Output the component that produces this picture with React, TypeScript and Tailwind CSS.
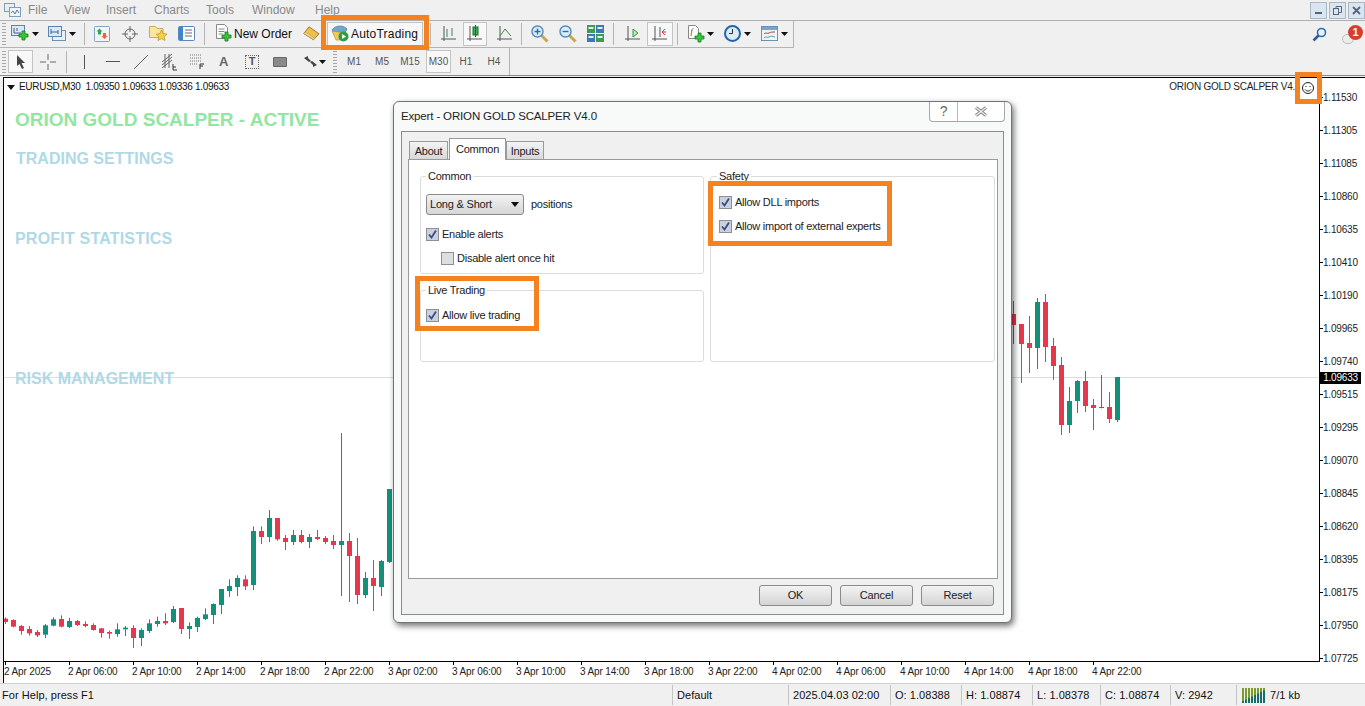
import React from "react";

type Candle = [string, number, number, number, number];

const G = "#14907a";
const R = "#e5384f";

// values read off the picture at 3x, y relative to 500
const leftCandles: Candle[] = [
  [R, 352, 356, 366, 372], [R, 358, 360, 380, 382], [R, 375, 378, 393, 404], [R, 378, 387, 400, 407],
  [R, 390, 396, 406, 411], [G, 372, 376, 404, 414], [G, 352, 358, 377, 379], [R, 346, 357, 380, 382],
  [G, 354, 363, 381, 384], [R, 360, 363, 375, 378], [R, 364, 372, 378, 382], [R, 370, 375, 390, 392],
  [R, 384, 385, 399, 413], [R, 392, 396, 401, 416], [G, 370, 388, 402, 410], [G, 378, 383, 388, 408],
  [R, 376, 384, 414, 444], [G, 385, 390, 414, 438], [G, 358, 370, 393, 399], [G, 350, 363, 372, 380],
  [R, 340, 363, 370, 375], [G, 318, 327, 366, 369], [R, 324, 324, 387, 402], [G, 367, 378, 387, 417],
  [G, 350, 354, 381, 396], [G, 325, 343, 357, 360], [G, 310, 312, 345, 372], [G, 267, 267, 315, 342],
  [G, 238, 258, 273, 291], [G, 226, 234, 261, 288], [R, 226, 238, 259, 270], [G, 79, 93, 255, 270],
  [R, 79, 93, 111, 132], [G, 30, 54, 111, 126], [R, 54, 54, 118, 122], [R, 105, 114, 126, 150],
  [G, 90, 105, 126, 135], [R, 90, 105, 126, 130], [G, 102, 111, 126, 144], [R, 90, 111, 117, 120],
  [R, 108, 114, 126, 132], [R, 105, 123, 135, 147], [G, -201, 123, 135, 288], [R, 99, 123, 168, 306],
  [R, 114, 168, 285, 312], [G, 216, 234, 285, 294], [R, 180, 234, 258, 333], [G, 180, 183, 261, 288],
  [G, -33, -33, 186, 189],
];

// y relative to 270 at 3x
const rightCandles: Candle[] = [
  [R, 93, 132, 165, 222], [R, 162, 162, 222, 339], [R, 138, 219, 234, 309], [G, 84, 96, 234, 297],
  [R, 72, 96, 231, 276], [R, 204, 228, 288, 330], [R, 261, 285, 465, 495], [G, 351, 393, 465, 489],
  [G, 330, 333, 393, 429], [R, 303, 333, 408, 426], [R, 387, 405, 414, 480], [G, 315, 411, 414, 415],
  [R, 366, 411, 447, 459], [G, 321, 321, 450, 456],
];

const prices = [
  "1.11530", "1.11305", "1.11085", "1.10860", "1.10635", "1.10410", "1.10190", "1.09965", "1.09740",
  "1.09515", "1.09295", "1.09070", "1.08845", "1.08620", "1.08395", "1.08175", "1.07950", "1.07725",
];

const times = [
  "2 Apr 2025", "2 Apr 06:00", "2 Apr 10:00", "2 Apr 14:00", "2 Apr 18:00", "2 Apr 22:00",
  "3 Apr 02:00", "3 Apr 06:00", "3 Apr 10:00", "3 Apr 14:00", "3 Apr 18:00", "3 Apr 22:00",
  "4 Apr 02:00", "4 Apr 06:00", "4 Apr 10:00", "4 Apr 14:00", "4 Apr 18:00", "4 Apr 22:00",
];

function CandleShape({ c, x, base }: { c: Candle; x: number; base: number }) {
  const y = (v: number) => base + v / 3;
  return (
    <g>
      <rect x={x} y={y(c[1])} width={1} height={(c[4] - c[1]) / 3} fill={c[0]} />
      <rect x={x - 2} y={y(c[2])} width={5} height={Math.max((c[3] - c[2]) / 3, 1)} fill={c[0]} />
    </g>
  );
}

function Plot() {
  return (
    <svg width={1315} height={583} viewBox="4 78 1315 583" className="block">
      <rect x={4} y={377} width={1315} height={1} fill="#dcdcdc" />
      <rect x={394} y={463} width={6} height={28} fill="#bfe3ea" />
      <rect x={1004} y={280} width={7} height={36} fill="#edc9da" />
      {leftCandles.map((c, i) => (
        <CandleShape key={i} c={c} x={5 + 8 * i} base={500} />
      ))}
      {rightCandles.map((c, i) => (
        <CandleShape key={i} c={c} x={1013 + 8 * i} base={270} />
      ))}
    </svg>
  );
}

const Grip = () => (
  <div className="ml-[2px] h-[22px] w-[4px] shrink-0 bg-[repeating-linear-gradient(to_bottom,#a8a8a8_0,#a8a8a8_1px,transparent_1px,transparent_3px)]" />
);

const Sep = ({ className }: { className: string }) => <div className={`h-[22px] w-px shrink-0 bg-[#b4b4b4] ${className}`} />;

const Caret = ({ className }: { className: string }) => (
  <svg width={7} height={4} viewBox="0 0 7 4" className={`shrink-0 ${className}`}>
    <path d="M0 0h7L3.5 4z" fill="#111" />
  </svg>
);

const Plus = ({ x, y }: { x: number; y: number }) => (
  <path
    transform={`translate(${x} ${y})`}
    d="M3 0h3v3h3v3H6v3H3V6H0V3h3z"
    fill="#3cc43c"
    stroke="#127a1e"
    strokeWidth={0.8}
  />
);

const NewChartIcon = () => (
  <svg width={19} height={17} viewBox="0 0 19 17" className="block">
    <rect x={0.5} y={0.5} width={13} height={10} fill="#dbe9f7" stroke="#5b84b1" />
    <path d="M3 3v5M3 8h7M6 3v3" stroke="#44618a" fill="none" />
    <Plus x={8} y={6} />
  </svg>
);

const ProfileIcon = () => (
  <svg width={18} height={17} viewBox="0 0 18 17" className="block">
    <rect x={4.5} y={5.5} width={13} height={10} fill="#e7eff8" stroke="#6b8fb8" />
    <rect x={0.5} y={1.5} width={13} height={10} fill="#dbe9f7" stroke="#5b84b1" />
    <path d="M3 4v5M3 7h7M10 5v4" stroke="#44618a" fill="none" />
  </svg>
);

const MarketIcon = () => (
  <svg width={16} height={16} viewBox="0 0 16 16" className="block">
    <rect x={0.5} y={0.5} width={15} height={15} rx={1} fill="#f0f5fb" stroke="#86a4c6" />
    <path d="M5.5 2.5l3 3H7v3H4v-3H2.5z" fill="#2fa84a" />
    <path d="M10.5 13l-3-3H9V7h3v3h1.5z" fill="#e8663c" />
  </svg>
);

const NavIcon = () => (
  <svg width={16} height={16} viewBox="0 0 16 16" fill="none" stroke="#666" className="block">
    <circle cx={8} cy={8} r={5} />
    <path d="M8 0v6M8 10v6M0 8h6M10 8h6" />
  </svg>
);

const FolderStarIcon = () => (
  <svg width={19} height={17} viewBox="0 0 19 17" className="block">
    <path d="M.5 3V1.5h6l1.5 2h6v9H.5z" fill="#fbe5a0" stroke="#c9a95a" />
    <path d="M12.5 5l1.7 3.6 3.8.5-2.8 2.6.8 3.8-3.5-1.9-3.5 1.9.8-3.8L7 9.1l3.8-.5z" fill="#f7d23e" stroke="#b58f1f" strokeWidth={0.7} />
  </svg>
);

const TerminalIcon = () => (
  <svg width={17} height={16} viewBox="0 0 17 16" className="block">
    <rect x={0.5} y={0.5} width={16} height={14} rx={1} fill="#fff" stroke="#5a86b8" />
    <rect x={1} y={1} width={4} height={13} fill="#3e86cf" />
    <path d="M7 4h7M7 7h7M7 10h7" stroke="#667" />
  </svg>
);

const NewOrderIcon = () => (
  <svg width={18} height={19} viewBox="0 0 18 19" className="block">
    <path d="M1.5.5h8l3 3v11h-11z" fill="#fff" stroke="#888" />
    <path d="M3.5 5h6M3.5 7.5h6M3.5 10h4" stroke="#8a8a8a" />
    <Plus x={7} y={8} />
  </svg>
);

const BookIcon = () => (
  <svg width={17} height={15} viewBox="0 0 17 15" className="block">
    <path d="M6 .8l10 7-5.5 6L.8 7.5z" fill="#ecc04e" stroke="#a8792a" />
    <path d="M.8 7.5l9.7 6 1-1.2L2.2 6z" fill="#f7e6ac" stroke="#a8792a" strokeWidth={0.5} />
  </svg>
);

const AutoTradingIcon = () => (
  <svg width={18} height={17} viewBox="0 0 18 17" className="block shrink-0">
    <path d="M1 5c2-3 5-4 8-4s5 1 7 3l-2 4H3z" fill="#6fa8cf" stroke="#3e6f92" strokeWidth={0.6} />
    <path d="M1 6l4 9h6l3-7z" fill="#eecb57" stroke="#a8893a" strokeWidth={0.6} />
    <circle cx={12.5} cy={11.5} r={5} fill="#2e9d45" />
    <path d="M11 9l4 2.5L11 14z" fill="#fff" />
  </svg>
);

const Axes = ({ children }: { children?: React.ReactNode }) => (
  <svg width={16} height={17} viewBox="0 0 16 17" fill="none" className="block">
    <path d="M3 1v15M0 14h15" stroke="#555" />
    {children}
  </svg>
);

const ZoomIcon = ({ plus }: { plus: boolean }) => (
  <svg width={18} height={18} viewBox="0 0 18 18" fill="none" className="block">
    <path d="M10.5 10.5l6 6" stroke="#c9a650" strokeWidth={3} />
    <circle cx={6.5} cy={6.5} r={5.5} fill="#dcedfa" stroke="#4f8ac0" strokeWidth={1.4} />
    <path d={plus ? "M3.5 6.5h6M6.5 3.5v6" : "M3.5 6.5h6"} stroke="#2e6ea8" strokeWidth={1.4} />
  </svg>
);

const TileIcon = () => (
  <svg width={17} height={17} viewBox="0 0 17 17" className="block">
    <rect width={8} height={8} fill="#3f9a54" />
    <rect x={9} width={8} height={8} fill="#3a78b8" />
    <rect y={9} width={8} height={8} fill="#3a78b8" />
    <rect x={9} y={9} width={8} height={8} fill="#3f9a54" />
    <path d="M1.5 3h5M10.5 3h5M1.5 12h5M10.5 12h5" stroke="#e6eef6" strokeWidth={2} />
  </svg>
);

const IndicatorIcon = () => (
  <svg width={17} height={18} viewBox="0 0 17 18" className="block">
    <path d="M.5.5h7l3 3v10H.5z" fill="#fff" stroke="#888" />
    <text x={2.5} y={9} fontSize={8} fontStyle="italic" fill="#333" fontFamily="'Liberation Serif', serif">f</text>
    <Plus x={7} y={8} />
  </svg>
);

const ClockIcon = () => (
  <svg width={17} height={17} viewBox="0 0 17 17" fill="none" className="block">
    <circle cx={8.5} cy={8.5} r={7.5} fill="#dfe9f4" stroke="#1e66ad" strokeWidth={2} />
    <path d="M8.5 4v4.5H5" stroke="#234" />
  </svg>
);

const TemplateIcon = () => (
  <svg width={17} height={15} viewBox="0 0 17 15" fill="none" className="block">
    <rect x={0.5} y={0.5} width={16} height={14} fill="#eef4fa" stroke="#6d8fb3" />
    <rect x={1} y={1} width={15} height={3} fill="#7ba3cc" />
    <path d="M3 8c2-2 3 0 5-1s3-1 6-1" stroke="#a44" />
    <path d="M3 12c2-2 3 0 5-1s3-1 6 0" stroke="#4a8" />
  </svg>
);

const WinButton = ({ children }: { children: React.ReactNode }) => (
  <div className="flex h-[17px] w-[17px] items-center justify-center border border-[#a9b8c9] bg-[#dbe5ef]">{children}</div>
);

function MenuBar() {
  const items: [string, string][] = [
    ["File", "w-[36px]"], ["View", "w-[42px]"], ["Insert", "w-[48px]"], ["Charts", "w-[52px]"],
    ["Tools", "w-[46px]"], ["Window", "w-[63px]"], ["Help", "w-[40px]"],
  ];
  return (
    <div className="flex h-[20px] shrink-0 items-center bg-[#f0f0f0]">
      <svg width={17} height={16} viewBox="0 0 17 16" className="ml-[4px] mr-[7px]" fill="none">
        <rect x={0.5} y={1.5} width={10} height={8} fill="#e6eef7" stroke="#7d9dbd" />
        <rect x={5.5} y={5.5} width={11} height={9} fill="#eef4fa" stroke="#7d9dbd" />
        <path d="M7 11l2-2 2 3 2-4 2 3" stroke="#5a7ea6" />
      </svg>
      {items.map(([name, w]) => (
        <span key={name} className={`${w} text-[12px] text-[#888888]`}>{name}</span>
      ))}
      <div className="ml-auto mr-0 flex gap-[2px]">
        <WinButton>
          <div className="mt-[6px] h-[2px] w-[7px] bg-[#54667d]" />
        </WinButton>
        <WinButton>
          <svg width={9} height={9} viewBox="0 0 9 9" fill="none" stroke="#54667d">
            <rect x={0.5} y={2.5} width={5} height={6} />
            <path d="M3 2.5v-2h5.5v6h-3" />
          </svg>
        </WinButton>
        <WinButton>
          <svg width={9} height={9} viewBox="0 0 9 9" stroke="#54667d" strokeWidth={1.8}>
            <path d="M1 1l7 7M8 1L1 8" />
          </svg>
        </WinButton>
      </div>
    </div>
  );
}

function ToolbarTop() {
  return (
    <div className="flex h-[28px] shrink-0 border-t border-[#b0b0b0] bg-[#f0f0f0]">
      <div className="flex w-[794px] shrink-0 items-center border-b border-r border-[#b4b4b4] pb-[1px]">
        <Grip />
        <div className="ml-[5px]"><NewChartIcon /></div>
        <Caret className="ml-[2px]" />
        <div className="ml-[9px]"><ProfileIcon /></div>
        <Caret className="ml-[3px]" />
        <Sep className="ml-[8px]" />
        <div className="ml-[9px]"><MarketIcon /></div>
        <div className="ml-[12px]"><NavIcon /></div>
        <div className="ml-[11px]"><FolderStarIcon /></div>
        <div className="ml-[10px]"><TerminalIcon /></div>
        <Sep className="ml-[9px]" />
        <div className="ml-[10px]"><NewOrderIcon /></div>
        <span className="ml-[1px] w-[58px] whitespace-nowrap text-[12px] text-[#111]">New Order</span>
        <div className="ml-[11px]"><BookIcon /></div>
        <div className="ml-[7px] flex h-[24px] w-[96px] shrink-0 items-center border border-[#c4c4c4] bg-[#f7f7f7] pl-[3px]">
          <AutoTradingIcon />
          <span className="ml-[2px] whitespace-nowrap text-[12px] tracking-[0.2px] text-[#111]">AutoTrading</span>
        </div>
        <Sep className="ml-[7px]" />
        <div className="ml-[10px]">
          <Axes><path d="M6 4v8M11 3v8" stroke="#3b8a48" /></Axes>
        </div>
        <div className="ml-[6px] flex h-[24px] w-[24px] shrink-0 items-center justify-center border border-[#c4c4c4] bg-[#f8f8f8]">
          <Axes>
            <rect x={6} y={2} width={5} height={8} fill="#3fae52" stroke="#1e6b2c" />
            <path d="M8.5 0v12" stroke="#1e6b2c" />
          </Axes>
        </div>
        <div className="ml-[10px]">
          <Axes><path d="M3 11l5-7 6 7" stroke="#3b8a48" /></Axes>
        </div>
        <Sep className="ml-[8px]" />
        <div className="ml-[9px]"><ZoomIcon plus /></div>
        <div className="ml-[10px]"><ZoomIcon plus={false} /></div>
        <div className="ml-[10px]"><TileIcon /></div>
        <Sep className="ml-[9px]" />
        <div className="ml-[11px]">
          <Axes><path d="M8 4l5 4-5 4z" fill="#bde8bd" stroke="#2c9a3c" /></Axes>
        </div>
        <div className="ml-[6px] flex h-[24px] w-[26px] shrink-0 items-center justify-center border border-[#c4c4c4] bg-[#f8f8f8]">
          <Axes>
            <path d="M8 2v10" stroke="#555" />
            <path d="M14 7H10M10 7l3-3M10 7l3 3" stroke="#c23a3a" />
          </Axes>
        </div>
        <Sep className="ml-[4px]" />
        <div className="ml-[10px]"><IndicatorIcon /></div>
        <Caret className="ml-[2px]" />
        <div className="ml-[10px]"><ClockIcon /></div>
        <Caret className="ml-[3px]" />
        <div className="ml-[10px]"><TemplateIcon /></div>
        <Caret className="ml-[3px]" />
      </div>
      <div className="flex flex-1 items-center">
        <svg width={15} height={15} viewBox="0 0 15 15" fill="none" className="ml-[518px]">
          <circle cx={9.5} cy={5.5} r={4} fill="#e8f2fb" stroke="#2c6db0" strokeWidth={1.6} />
          <path d="M6.5 8.5L1.5 13.5" stroke="#2c5f9e" strokeWidth={2.6} />
        </svg>
        <div className="relative ml-[15px] h-[20px] w-[22px]">
          <div className="absolute bottom-[1px] left-0 h-[10px] w-[12px] rounded-full border border-[#bcbcbc] bg-[#ececec]" />
          <div className="absolute right-[1px] top-0 flex h-[15px] w-[15px] items-center justify-center rounded-full bg-[#d4402b] text-[11px] font-bold text-white">1</div>
        </div>
      </div>
    </div>
  );
}

function ToolbarBottom() {
  const tf = ["M1", "M5", "M15", "M30", "H1", "H4"];
  return (
    <div className="flex h-[27px] shrink-0 bg-[#f0f0f0]">
      <div className="flex w-[510px] items-center border-r border-[#b4b4b4]">
        <Grip />
        <div className="ml-[2px] flex h-[23px] w-[25px] shrink-0 items-center justify-center border border-[#c4c4c4] bg-[#f8f8f8]">
          <svg width={10} height={14} viewBox="0 0 10 14"><path d="M1 0l8 8H5.5L8 13l-2 1-2.500-5L1 11z" fill="#444" /></svg>
        </div>
        <svg width={16} height={16} viewBox="0 0 16 16" className="ml-[7px]" stroke="#666"><path d="M8 0v6M8 10v6M0 8h6M10 8h6" /></svg>
        <Sep className="ml-[10px]" />
        <svg width={3} height={14} viewBox="0 0 3 14" className="ml-[16px]" stroke="#555"><path d="M1.500 0v14" /></svg>
        <svg width={14} height={3} viewBox="0 0 14 3" className="ml-[20px]" stroke="#555"><path d="M0 1.500h14" /></svg>
        <svg width={14} height={14} viewBox="0 0 14 14" className="ml-[14px]" stroke="#666"><path d="M0 14L14 0" /></svg>
        <svg width={16} height={18} viewBox="0 0 16 18" className="ml-[14px]" fill="none" stroke="#666">
          <path d="M0 9L10 1M0 12L10 4M0 15L10 7M3 1v14M7 1v14" />
          <path d="M11 11v6h4M11 14h3" stroke="#333" />
        </svg>
        <svg width={14} height={15} viewBox="0 0 14 15" className="ml-[12px]" fill="none" stroke="#777" strokeDasharray="1 1">
          <path d="M0 1h12M0 4h12M0 7h12M0 10h8" />
          <path d="M10 10v5M10 10h4M10 12h3" stroke="#333" strokeDasharray="none" />
        </svg>
        <span className="ml-[15px] w-[10px] text-[13px] font-bold text-[#666]">A</span>
        <div className="ml-[16px] flex h-[14px] w-[14px] shrink-0 items-center justify-center border border-dotted border-[#666] text-[11px] font-bold leading-none text-[#555]">T</div>
        <div className="ml-[14px] h-[10px] w-[14px] shrink-0 rounded-[1px] border border-[#666] bg-[#8a8a8a]" />
        <svg width={15} height={12} viewBox="0 0 15 12" className="ml-[16px]">
          <path d="M1 2l4-2v2l3 3-2 1zM14 9l-4 2V9L7 6l2-1z" fill="#444" />
        </svg>
        <Caret className="ml-[1px]" />
        <div className="ml-[5px]"><Grip /></div>
        <div className="w-[3px] shrink-0" />
        {tf.map((t) =>
          t === "M30" ? (
            <div key={t} className="ml-[2px] mr-[1px] flex h-[23px] w-[25px] shrink-0 items-center justify-center border border-[#c4c4c4] bg-[#f8f8f8] text-[10px] text-[#555]">{t}</div>
          ) : (
            <div key={t} className="w-[28px] shrink-0 text-center text-[10px] text-[#555]">{t}</div>
          ),
        )}
      </div>
    </div>
  );
}

function Chart() {
  return (
    <div className="flex min-h-0 flex-1 flex-col border-t border-[#8a8a8a] bg-[#f0f0f0] pl-[3px] pt-[1px]">
      <div className="flex flex-1 border-l border-t border-black bg-white">
        <div className="flex w-[1316px] shrink-0 flex-col">
          <div className="relative h-[584px] border-b border-r border-black">
            <Plot />
            <div className="absolute left-[3px] top-[3px] flex items-center whitespace-nowrap text-[10px] leading-[12px] tracking-[-0.3px] text-[#111]">
              <svg width={8} height={5} viewBox="0 0 8 5" className="mr-[4px]"><path d="M0 0h8L4 5z" fill="#111" /></svg>
              EURUSD,M30&nbsp; 1.09350 1.09633 1.09336 1.09633
            </div>
            <div className="absolute right-[24px] top-[3px] whitespace-nowrap text-[10px] leading-[12px] tracking-[-0.25px] text-[#222]">ORION GOLD SCALPER V4.</div>
            <svg width={14} height={14} viewBox="0 0 14 14" fill="none" stroke="#222" className="absolute left-[1297px] top-[3px]">
              <circle cx={7} cy={7} r={5.500} />
              <path d="M4 8.500c1.500 2 4.500 2 6 0M5 5v1M9 5v1" />
            </svg>
            <div className="absolute left-[11px] top-[30px] text-[19px] font-bold leading-[24px] text-[#93e6a0]">ORION GOLD SCALPER - ACTIVE</div>
            <div className="absolute left-[12px] top-[71px] text-[16px] font-bold leading-[20px] text-[#b0d9e6]">TRADING SETTINGS</div>
            <div className="absolute left-[11px] top-[151px] text-[16px] font-bold leading-[20px] tracking-[0.2px] text-[#b0d9e6]">PROFIT STATISTICS</div>
            <div className="absolute left-[11px] top-[291px] text-[16px] font-bold leading-[20px] text-[#b0d9e6]">RISK MANAGEMENT</div>
          </div>
          <div className="flex">
            {times.map((t) => (
              <div key={t} className="relative h-[21px] w-[64px] shrink-0 whitespace-nowrap pt-[4px] text-[10px] leading-[12px] tracking-[-0.15px] text-[#222]">
                <div className="absolute left-[1px] top-0 h-[3px] w-px bg-black" />
                {t}
              </div>
            ))}
          </div>
        </div>
        <div className="relative flex-1 overflow-hidden pt-[3px]">
          {prices.map((p) => (
            <div key={p} className="flex h-[33px] items-center text-[10px] tracking-[-0.2px] text-[#222]">
              <div className="h-px w-[3px] bg-black" />
              {p}
            </div>
          ))}
          <div className="absolute left-0 top-[294px] h-[12px] w-[41px] bg-black text-center text-[10px] leading-[12px] tracking-[-0.2px] text-white">1.09633</div>
        </div>
      </div>
    </div>
  );
}

function StatusBar() {
  const cells: [string, string][] = [
    ["Default", "w-[116px]"], ["2025.04.03 02:00", "w-[102px]"], ["O: 1.08388", "w-[71px]"], ["H: 1.08874", "w-[71px]"],
    ["L: 1.08378", "w-[68px]"], ["C: 1.08874", "w-[70px]"], ["V: 2942", "w-[66px]"],
  ];
  return (
    <div className="flex h-[23px] shrink-0 items-center border-t border-[#d0d0d0] bg-[#f0f0f0] text-[11px] tracking-[0.05px] text-[#111]">
      <span className="w-[672px] pl-[2px]">For Help, press F1</span>
      {cells.map(([c, w]) => (
        <div key={c} className={`${w} h-[20px] border-l border-[#c4c4c4] pl-[4px] leading-[20px]`}>{c}</div>
      ))}
      <div className="flex h-[20px] flex-1 items-center border-l border-[#c4c4c4] pl-[5px]">
        <svg width={24} height={15} viewBox="0 0 24 15" className="mr-[4px]">
          {[0, 3, 6, 9, 12, 15, 18, 21].map((x, i) => (
            <g key={x}>
              <rect x={x} y={0} width={2} height={15} fill="#7d9a2c" />
              <rect x={x} y={13 - i * 1.500} width={2} height={2 + i * 1.500} fill="#12706a" />
            </g>
          ))}
        </svg>
        7/1 kb
      </div>
    </div>
  );
}

const Check = ({ on = true }: { on?: boolean }) => (
  <span className={`flex h-[13px] w-[13px] shrink-0 items-center justify-center border border-[#8e8f8f] ${on ? "bg-[#c9d0e2]" : "bg-[#dedede]"}`}>
    {on && (
      <svg width={11} height={11} viewBox="0 0 11 11" fill="none">
        <path d="M2 5.500l2.500 3L9 1.500" stroke="#3c4c78" strokeWidth={1.800} />
      </svg>
    )}
  </span>
);

const CheckRow = ({ label, on, className }: { label: string; on?: boolean; className: string }) => (
  <div className={`flex h-[13px] items-center ${className}`}>
    <Check on={on} />
    <span className="ml-[3px] whitespace-nowrap">{label}</span>
  </div>
);

const Legend = ({ children, className }: { children: React.ReactNode; className?: string }) => (
  <legend className={`h-[14px] px-[2px] leading-[14px] ${className ?? ""}`}>{children}</legend>
);

const tabClass = "flex h-[18px] items-center justify-center border border-b-0 border-[#9a9a9a] bg-gradient-to-b from-[#f4f4f4] to-[#d8d8d8] pt-[1px]";

const DialogButton = ({ label, className }: { label: string; className: string }) => (
  <div className={`flex h-[21px] w-[73px] items-center justify-center rounded-[3px] border border-[#8a8a8a] bg-gradient-to-b from-[#f3f3f3] to-[#d4d4d4] tracking-[-0.1px] ${className}`}>{label}</div>
);

function Dialog() {
  return (
    <div className="absolute left-[393px] top-[101px] flex h-[522px] w-[619px] flex-col rounded-[6px] border border-[#6f7377] bg-[#f8f9f9] px-[7px] pb-[7px] text-[11px] tracking-[-0.25px] text-[#222] shadow-[2px_3px_6px_rgba(0,0,0,0.55)]">
      <div className="relative h-[29px] shrink-0">
        <div className="pt-[6px] text-[11.500px] leading-[16px] tracking-[-0.15px] text-[#222]">Expert - ORION GOLD SCALPER V4.0</div>
        <div className="absolute right-[-1px] top-0 flex h-[20px] w-[76px] rounded-b-[4px] border border-t-0 border-[#a8a8a8] bg-white">
          <div className="flex w-[28px] items-center justify-center border-r border-[#b8b8b8] text-[14px] text-[#666]">?</div>
          <div className="flex flex-1 items-center justify-center">
            <svg width={14} height={11} viewBox="0 0 14 11" fill="none">
              <path d="M2 1.500l10 8M12 1.500l-10 8" stroke="#7a7a7a" strokeWidth={3} />
              <path d="M2 1.500l10 8M12 1.500l-10 8" stroke="#f4f4f4" strokeWidth={1.300} />
            </svg>
          </div>
        </div>
      </div>
      <div className="flex min-h-0 flex-1 flex-col border border-[#8c8c8c] bg-[#f0f0f0] pl-[6px] pr-[5px]">
        <div className="mt-[6px] flex h-[21px] shrink-0 items-end pl-[1px]">
          <div className={`${tabClass} w-[39px]`}>About</div>
          <div className="z-10 -mb-px ml-[1px] flex h-[22px] w-[57px] items-center justify-center border border-b-0 border-[#9a9a9a] bg-white pb-[1px]">Common</div>
          <div className={`${tabClass} w-[38px]`}>Inputs</div>
        </div>
        <div className="flex h-[420px] shrink-0 items-start gap-[6px] border border-[#9a9a9a] bg-white pl-[11px] pt-[9px]">
          <div className="flex w-[284px] flex-col gap-[9px]">
            <fieldset className="h-[105px] rounded-[3px] border border-[#dcdcdc] pl-[5px]">
              <Legend>Common</Legend>
              <div className="mt-[11px] flex items-center">
                <div className="flex h-[21px] w-[98px] items-center justify-between rounded-[3px] border border-[#8a8a8a] bg-gradient-to-b from-[#f2f2f2] to-[#d6d6d6] pl-[3px] pr-[4px] tracking-[-0.2px]">
                  Long &amp; Short
                  <svg width={8} height={5} viewBox="0 0 8 5"><path d="M0 0h8L4 5z" fill="#111" /></svg>
                </div>
                <span className="ml-[7px]">positions</span>
              </div>
              <CheckRow label="Enable alerts" className="mt-[13px]" />
              <CheckRow label="Disable alert once hit" on={false} className="ml-[15px] mt-[11px]" />
            </fieldset>
            <fieldset className="h-[79px] rounded-[3px] border border-[#dcdcdc] pl-[5px]">
              <Legend>Live Trading</Legend>
              <CheckRow label="Allow live trading" className="mt-[12px]" />
            </fieldset>
          </div>
          <fieldset className="h-[193px] w-[285px] rounded-[3px] border border-[#dcdcdc] pl-[8px]">
            <Legend className="-ml-[2px]">Safety</Legend>
            <CheckRow label="Allow DLL imports" className="mt-[13px]" />
            <CheckRow label="Allow import of external experts" className="mt-[11px]" />
          </fieldset>
        </div>
        <div className="mt-[6px] flex justify-end">
          <DialogButton label="OK" className="mr-[8px]" />
          <DialogButton label="Cancel" className="mr-[8px]" />
          <DialogButton label="Reset" className="mr-[4px]" />
        </div>
      </div>
    </div>
  );
}

export default function App() {
  return (
    <div className="relative flex h-[706px] w-[1365px] flex-col overflow-hidden bg-[#f0f0f0] [font-family:'Liberation_Sans',Arial,sans-serif]">
      <MenuBar />
      <ToolbarTop />
      <ToolbarBottom />
      <Chart />
      <StatusBar />
      <Dialog />
      <div className="absolute left-[321px] top-[15px] h-[35px] w-[108px] border-[5px] border-[#f58220]" />
      <div className="absolute left-[1295px] top-[72px] h-[32px] w-[27px] border-[5px] border-[#f58220]" />
      <div className="absolute left-[708px] top-[181px] h-[65px] w-[184px] border-[5px] border-[#f58220]" />
      <div className="absolute left-[415px] top-[276px] h-[55px] w-[124px] border-[5px] border-[#f58220]" />
    </div>
  );
}
